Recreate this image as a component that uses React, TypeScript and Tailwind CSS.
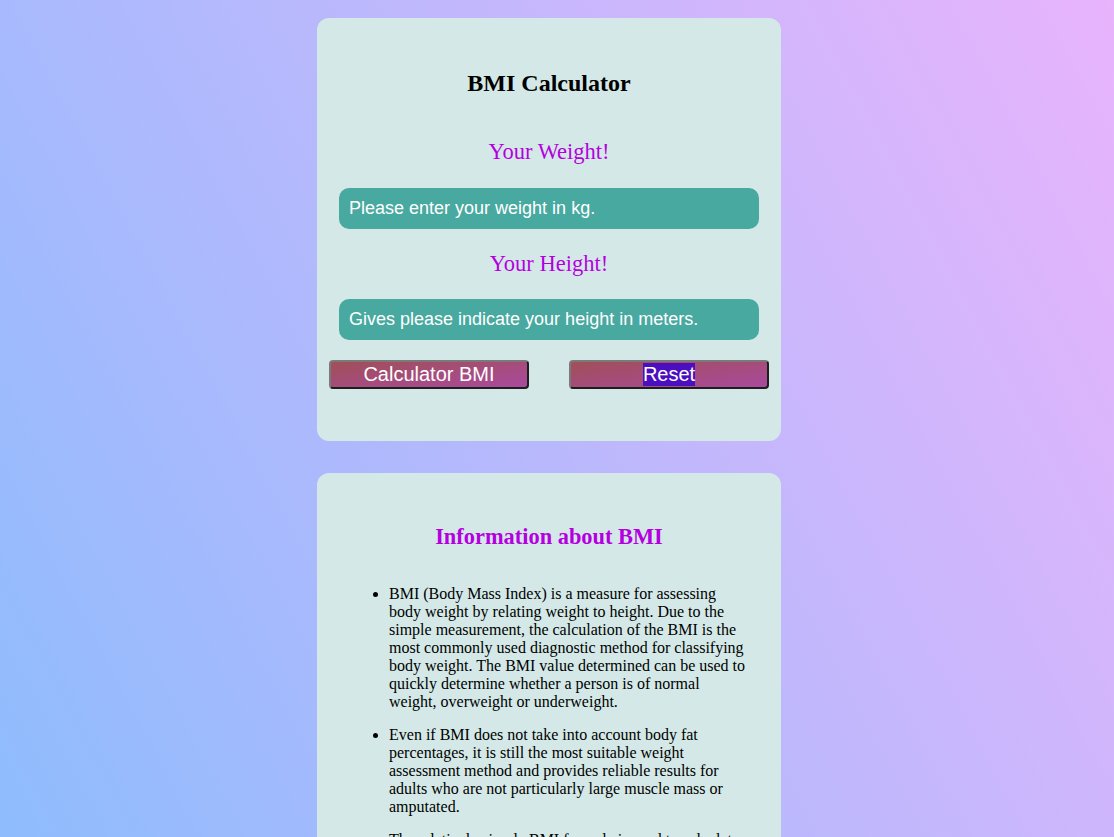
import { useState } from "react";

const serif = "font-['Liberation_Serif','Times_New_Roman',serif]";
const sans = "font-['Liberation_Sans',Arial,sans-serif]";

const info = [
  "BMI (Body Mass Index) is a measure for assessing body weight by relating weight to height. Due to the simple measurement, the calculation of the BMI is the most commonly used diagnostic method for classifying body weight. The BMI value determined can be used to quickly determine whether a person is of normal weight, overweight or underweight.",
  "Even if BMI does not take into account body fat percentages, it is still the most suitable weight assessment method and provides reliable results for adults who are not particularly large muscle mass or amputated.",
  "The relatively simple BMI formula is used to calculate the body mass index: body weight in kilograms divided by the square of the height in meters.",
];

export default function App() {
  const [weight, setWeight] = useState("");
  const [height, setHeight] = useState("");

  return (
    <div className={`min-h-screen bg-fixed bg-[linear-gradient(62deg,#8ebcfd,#e8b4fc)] pt-[18px] pb-10 ${serif}`}>
      <div className="mx-auto w-[480px]">
        {/* Calculator */}
        <div className="w-[464px] rounded-[12px] bg-[#d4e9e7] px-3 pt-[51px] pb-[52px]">
          <h2 className="text-center text-[24px] font-bold leading-[28px] text-black">BMI Calculator</h2>

          <h3 className="mt-[42px] text-center text-[22.5px] leading-[25px] text-[#b400e0]">Your Weight!</h3>
          <input
            value={weight}
            onChange={(e) => setWeight(e.target.value)}
            placeholder="Please enter your weight in kg."
            className={`mx-[10px] mt-[24px] block h-[41px] w-[420px] rounded-[10px] bg-[#48a9a0] px-[10px] text-[18px] text-white outline-none placeholder:text-white ${sans}`}
          />

          <h3 className="mt-[22px] text-center text-[22.5px] leading-[25px] text-[#b400e0]">Your Height!</h3>
          <input
            value={height}
            onChange={(e) => setHeight(e.target.value)}
            placeholder="Gives please indicate your height in meters."
            className={`mx-[10px] mt-[23px] block h-[41px] w-[420px] rounded-[10px] bg-[#48a9a0] px-[10px] text-[18px] text-white outline-none placeholder:text-white ${sans}`}
          />

          <div className={`mt-[20px] flex justify-between ${sans}`}>
            <button className="flex h-[29px] w-[200px] items-center justify-center rounded-[4px] border-2 border-t-[#7a7a7a] border-l-[#7a7a7a] border-b-[#1e1e1e] border-r-[#1e1e1e] bg-[linear-gradient(to_bottom_right,#a14f58,#a94a9d)] pb-px text-[20px] leading-[23px] text-white">
              Calculator BMI
            </button>
            <button
              onClick={() => {
                setWeight("");
                setHeight("");
              }}
              className="flex h-[29px] w-[200px] items-center justify-center rounded-[4px] border-2 border-t-[#7a7a7a] border-l-[#7a7a7a] border-b-[#1e1e1e] border-r-[#1e1e1e] bg-[linear-gradient(to_bottom_right,#a14f58,#a94a9d)] pb-px text-[20px] leading-[23px] text-white"
            >
              <span className="bg-[#4b0fbf]">Reset</span>
            </button>
          </div>
        </div>

        {/* Info */}
        <div className="mt-[32px] w-[464px] rounded-[12px] bg-[#d4e9e7] px-8 pt-[51px] pb-8">
          <h2 className="text-center text-[22.4px] font-bold leading-[26px] text-[#b400e0]">Information about BMI</h2>
          <ul className="mt-[35px] list-disc pl-[40px] text-[16px] leading-[18px] text-black">
            {info.map((t) => (
              <li key={t.slice(0, 12)} className="mb-[15px]">
                {t}
              </li>
            ))}
          </ul>
        </div>
      </div>
    </div>
  );
}
